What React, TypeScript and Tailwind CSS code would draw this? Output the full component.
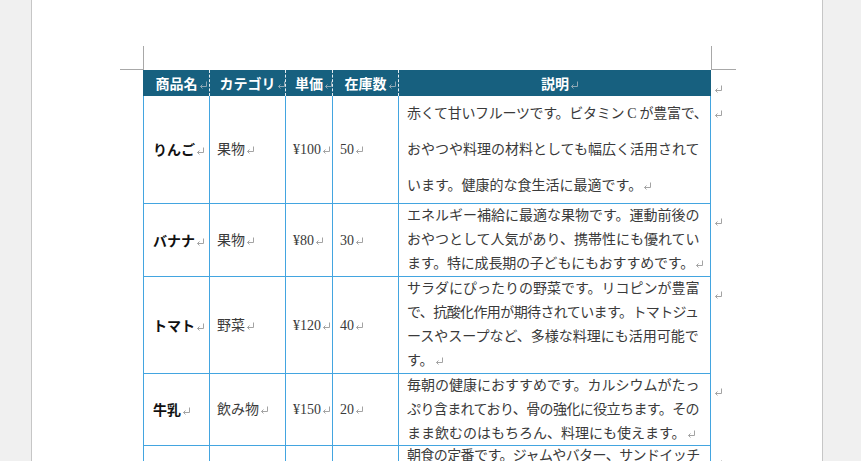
import React from "react";

const Mark = ({ color = "#a3a3a3" }: { color?: string }) => (
  <span className="inline-block w-0 align-baseline">
    <svg width="9" height="8" viewBox="0 0 9 8" className="block ml-[1px] overflow-visible">
      <path d="M7.5 0.5V5.5H1.5" stroke={color} strokeWidth="1" fill="none" />
      <path d="M3.5 3.5L1.5 5.5L3.5 7.5" stroke={color} strokeWidth="1" fill="none" />
    </svg>
  </span>
);

type Line = { t: string; tr?: string; end?: boolean };
type Row = { name: string; cat: string; price: string; stock: string; lh: string; lines: Line[] };

const rows: Row[] = [
  {
    name: "りんご",
    cat: "果物",
    price: "¥100",
    stock: "50",
    lh: "leading-[36px]",
    lines: [
      { t: "赤くて甘いフルーツです。ビタミン C が豊富で、", tr: "tracking-[-0.3px]" },
      { t: "おやつや料理の材料としても幅広く活用されて" },
      { t: "います。健康的な食生活に最適です。", end: true },
    ],
  },
  {
    name: "バナナ",
    cat: "果物",
    price: "¥80",
    stock: "30",
    lh: "leading-[24px]",
    lines: [
      { t: "エネルギー補給に最適な果物です。運動前後の" },
      { t: "おやつとして人気があり、携帯性にも優れてい" },
      { t: "ます。特に成長期の子どもにもおすすめです。", end: true, tr: "tracking-[-0.2px]" },
    ],
  },
  {
    name: "トマト",
    cat: "野菜",
    price: "¥120",
    stock: "40",
    lh: "leading-[24px]",
    lines: [
      { t: "サラダにぴったりの野菜です。リコピンが豊富" },
      { t: "で、抗酸化作用が期待されています。トマトジュ", tr: "tracking-[-0.6px]" },
      { t: "ースやスープなど、多様な料理にも活用可能で" },
      { t: "す。", end: true },
    ],
  },
  {
    name: "牛乳",
    cat: "飲み物",
    price: "¥150",
    stock: "20",
    lh: "leading-[24px]",
    lines: [
      { t: "毎朝の健康におすすめです。カルシウムがたっ" },
      { t: "ぷり含まれており、骨の強化に役立ちます。その", tr: "tracking-[-0.6px]" },
      { t: "まま飲むのはもちろん、料理にも使えます。", end: true },
    ],
  },
  {
    name: "",
    cat: "",
    price: "",
    stock: "",
    lh: "leading-[20px]",
    lines: [{ t: "朝食の定番です。ジャムやバター、サンドイッチ", tr: "tracking-[-0.6px]" }],
  },
];

const headers = ["商品名", "カテゴリ", "単価", "在庫数", "説明"];

export default function App() {
  const cell = "border-l border-b border-[#43a5e0]";
  return (
    <div className="w-[861px] h-[461px] overflow-hidden flex bg-[#f0f0f0] font-['Liberation_Serif','Noto_Sans_CJK_JP',serif] text-[14px] text-[#3a3a3a]">
      <div className="w-[31px] shrink-0" />
      <div className="w-[792px] shrink-0 h-full bg-white border-x border-[#c6c6c6] pt-[46px]">
        <div className="flex pl-[88px]">
          <div className="w-[24px] h-[24px] border-r border-b border-[#a8a8a8]" />
          <div className="w-[567px]" />
          <div className="w-[25px] h-[24px] border-l border-b border-[#a8a8a8]" />
        </div>
        <div className="ml-[111px] grid grid-cols-[66px_76px_47px_66px_313px_24px] grid-rows-[26px_108px_73px_97px_72px_40px]">
          {headers.map((h, i) => (
            <div
              key={h}
              className={
                "bg-[#17607f] flex items-center justify-center text-white font-bold font-['Noto_Sans_CJK_JP',sans-serif] leading-none " +
                (i === 0 ? "border-l border-[#17607f]" : "border-l border-dashed border-[#e8eef2]")
              }
            >
              <span className="whitespace-nowrap">
                {h}
                <Mark color="#8fa7b4" />
              </span>
            </div>
          ))}
          <div className="pl-[2px] pt-[8px]">
            <Mark />
          </div>
          {rows.map((r, idx) => (
            <React.Fragment key={idx}>
              <div className={cell + " flex items-center pl-[9px] font-bold text-[#111] font-['Noto_Sans_CJK_JP',sans-serif] whitespace-nowrap"}>
                {r.name && (
                  <span>
                    {r.name}
                    <Mark />
                  </span>
                )}
              </div>
              <div className={cell + " flex items-center pl-[7px] whitespace-nowrap"}>
                {r.cat && (
                  <span>
                    {r.cat}
                    <Mark />
                  </span>
                )}
              </div>
              <div className={cell + " flex items-center pl-[7px] whitespace-nowrap"}>
                {r.price && (
                  <span>
                    {r.price}
                    <Mark />
                  </span>
                )}
              </div>
              <div className={cell + " flex items-center pl-[7px] whitespace-nowrap"}>
                {r.stock && (
                  <span>
                    {r.stock}
                    <Mark />
                  </span>
                )}
              </div>
              <div className={cell + " border-r pl-[8px] " + r.lh}>
                {r.lines.map((l, j) => (
                  <div key={j} className={"whitespace-nowrap " + (l.tr ?? "")}>
                    {l.t}
                    {l.end && <Mark />}
                  </div>
                ))}
              </div>
              <div className="pl-[2px] pt-[7px]">
                <Mark />
              </div>
            </React.Fragment>
          ))}
        </div>
      </div>
      <div className="flex-1" />
    </div>
  );
}
